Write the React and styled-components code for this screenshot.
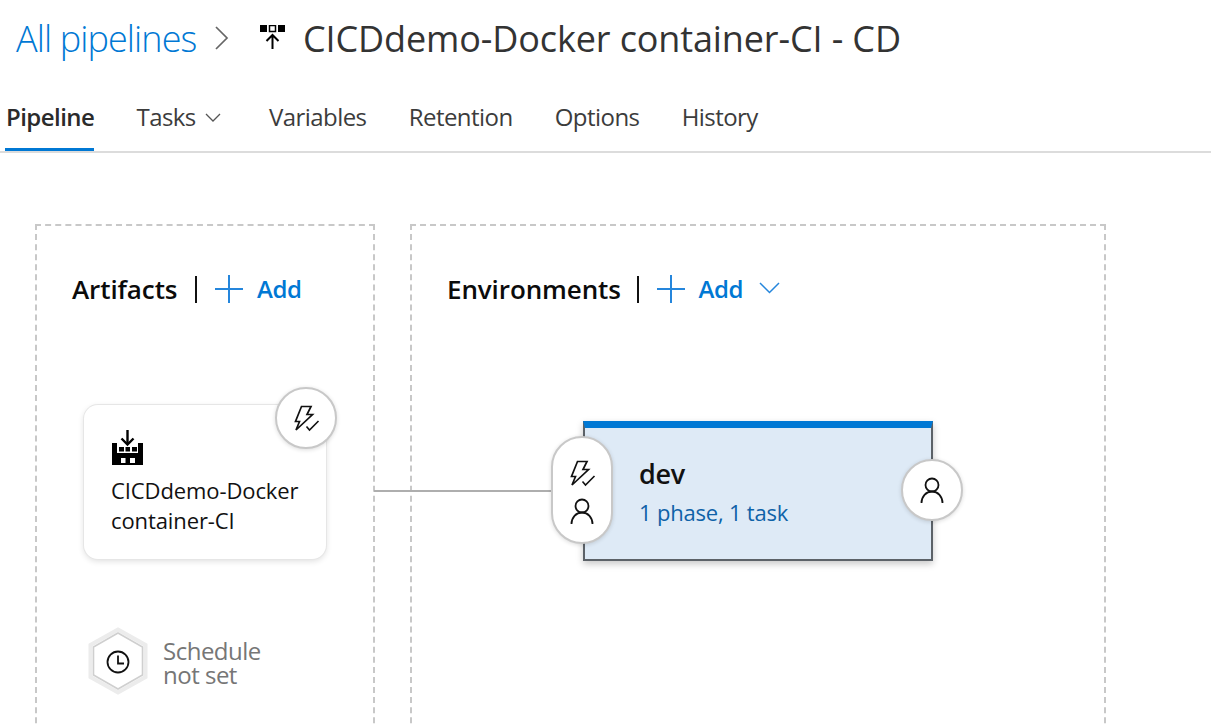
import React from "react";
import styled, { createGlobalStyle } from "styled-components";

const Global = createGlobalStyle`
  html, body { margin: 0; padding: 0; background: #fff; height: 727px; overflow: hidden; }
  body { font-family: "Open Sans", "Noto Sans", "Liberation Sans", sans-serif; }
  * { box-sizing: border-box; }
`;

const Page = styled.div`
  width: 1211px;
  height: 727px;
  overflow: hidden;
  display: flex;
  flex-direction: column;
`;
const Breadcrumb = styled.header`
  height: 76px;
  flex: none;
  display: flex;
  align-items: center;
  padding-left: 16px;
`;
const Crumb = styled.span`
  font-size: 36px;
  font-weight: 300;
  color: #0078d4;
  letter-spacing: -0.9px;
  width: 181px;
  white-space: nowrap;
`;
const CrumbSep = styled.svg`
  width: 16px;
  height: 26px;
  margin-left: 17px;
  margin-right: 30px;
  flex: none;
`;
const Title = styled.h1`
  margin: 0 0 0 17px;
  font-size: 36px;
  font-weight: 400;
  color: #333;
  letter-spacing: -0.12px;
  white-space: nowrap;
`;
const Tabs = styled.nav`
  height: 77px;
  display: flex;
  gap: 41.2px;
  padding-left: 5px;
  border-bottom: 2px solid #dcdcdc;
  flex: none;
`;
const Tab = styled.div`
  height: 75px;
  padding: 24px 0 0 1px;
  font-size: 24px;
  line-height: 34px;
  letter-spacing: -0.55px;
  white-space: nowrap;
  display: flex;
  align-items: flex-start;
  gap: 9px;
  font-weight: ${p => (p.$active ? 600 : 400)};
  color: ${p => (p.$active ? "#2b2b2b" : "#3c3c3c")};
  border-bottom: ${p => (p.$active ? "3px solid #0078d4" : "3px solid transparent")};
`;
const Chevron = styled.svg`
  width: ${p => p.$w}px;
  height: ${p => p.$h}px;
  align-self: center;
  flex: none;
`;
const TabChevron = styled(Chevron)`
  align-self: flex-start;
  margin: 13px 6px 0 0;
`;
const Canvas = styled.main`
  position: relative;
  flex: 1;
  min-height: 0;
  display: flex;
  gap: 35px;
  padding: 71px 0 0 35px;
`;
const Stage = styled.section`
  width: ${p => p.$w}px;
  height: 620px;
  flex: none;
  border: 2px dashed #c8c8c8;
  border-bottom: none;
  padding: 48px 0 0 ${p => p.$pad}px;
`;
const StageHead = styled.div`
  display: flex;
  align-items: center;
  height: 30px;
`;
const StageName = styled.h2`
  margin: 0;
  font-size: 26px;
  line-height: 30px;
  font-weight: 600;
  color: #0b0b0b;
  letter-spacing: -0.1px;
  white-space: nowrap;
  width: ${p => p.$w}px;
`;
const Divider = styled.span`
  width: ${p => p.$t}px;
  height: 27px;
  background: #111;
  margin: 0 18px 0 ${p => p.$l}px;
  flex: none;
`;
const AddLabel = styled.span`
  font-size: 24px;
  font-weight: 600;
  color: #0078d4;
  letter-spacing: -0.35px;
  margin-left: 14px;
  line-height: 30px;
`;
const PlusIcon = styled.svg`
  width: 28px;
  height: 28px;
  flex: none;
`;
const AddChevron = styled(Chevron)`
  margin-left: 16px;
  margin-top: -2px;
`;
const ArtifactCard = styled.article`
  position: relative;
  width: 242px;
  height: 154px;
  margin: 101px 0 0 12px;
  background: #fff;
  border-radius: 14px;
  box-shadow: 0 0 0 1px #e6e6e6, 0 2px 6px rgba(0, 0, 0, 0.14);
  padding: 25px 0 0 27px;
`;
const CardLabel = styled.div`
  margin-top: 10px;
  font-size: 22px;
  line-height: 30px;
  letter-spacing: -0.1px;
  color: #111;
  white-space: nowrap;
`;
const Badge = styled.div`
  position: absolute;
  width: 62px;
  height: 62px;
  border-radius: 50%;
  background: #fff;
  border: 2px solid #c8c8c8;
  box-shadow: 0 1px 4px rgba(0, 0, 0, 0.14);
  display: flex;
  align-items: center;
  justify-content: center;
  z-index: 2;
  top: ${p => p.$top}px;
  right: ${p => p.$right}px;
`;
const Schedule = styled.div`
  display: flex;
  align-items: center;
  gap: 14px;
  margin: 68px 0 0 15px;
`;
const ScheduleText = styled.div`
  font-size: 24px;
  line-height: 24px;
  margin-top: 4px;
  color: #767676;
  letter-spacing: -0.5px;
`;
const EnvCard = styled.article`
  position: relative;
  width: 350px;
  height: 140px;
  margin: 117px 0 0 136px;
  background: #deeaf6;
  border-top: 7px solid #0078d4;
  border-left: 2px solid #5c6268;
  border-right: 2px solid #5c6268;
  border-bottom: 2px solid #5c6268;
  box-shadow: 0 3px 7px rgba(0, 0, 0, 0.22);
  padding: 27px 0 0 54px;
`;
const EnvName = styled.div`
  font-size: 27px;
  line-height: 38px;
  font-weight: 600;
  color: #111;
  letter-spacing: -0.3px;
`;
const EnvMeta = styled.div`
  font-size: 22px;
  line-height: 38px;
  color: #0f62a8;
  letter-spacing: -0.2px;
`;
const ConditionPill = styled.div`
  position: absolute;
  left: -34px;
  top: 8px;
  width: 62px;
  height: 108px;
  padding-top: 4px;
  border-radius: 31px;
  background: #fff;
  border: 2px solid #c8c8c8;
  box-shadow: 0 1px 4px rgba(0, 0, 0, 0.14);
  display: flex;
  flex-direction: column;
  align-items: center;
  justify-content: center;
  gap: 11px;
  z-index: 2;
`;
const Connector = styled.div`
  position: absolute;
  left: 374px;
  top: 337px;
  width: 180px;
  height: 2px;
  background: #aeaeae;
`;

const Bolt = () => (
  <svg width="28" height="27" viewBox="0 0 28 27" fill="none" stroke="#111" strokeWidth="1.7">
    <path d="M9.5 1.5H19L15 9.5H20.5L4 25L7.5 16.5H3.5Z" strokeLinejoin="miter" />
    <path d="M14.5 21.5L17.5 25L26.5 16" stroke="#111" strokeWidth="1.6" />
  </svg>
);
const Person = () => (
  <svg width="24" height="27" viewBox="0 0 24 27" fill="none" stroke="#111" strokeWidth="1.8">
    <circle cx="12" cy="8" r="6.5" />
    <path d="M1.5 26C1.5 19.5 6 14.5 12 14.5C18 14.5 22.5 19.5 22.5 26" />
  </svg>
);
const Factory = () => (
  <svg width="32" height="35" viewBox="0 0 32 35" style={{ display: "block" }}>
    <path d="M16.5 0V14" stroke="#000" strokeWidth="2.4" fill="none" />
    <path d="M10.5 8.5L16.5 14.5L22.5 8.5" stroke="#000" strokeWidth="2.4" fill="none" />
    <path d="M1 35V13H6V23H27V13H32V35Z" fill="#000" />
    <g fill="#000">
      <rect x="8" y="17" width="5" height="4.5" />
      <rect x="14.5" y="17" width="4.5" height="4.5" />
      <rect x="21" y="17" width="5" height="4.5" />
    </g>
    <g fill="#fff">
      <rect x="10" y="28" width="4.5" height="5" />
      <rect x="19" y="28" width="5" height="5" />
    </g>
  </svg>
);
const Hexagon = () => (
  <svg width="62" height="68" viewBox="0 0 62 68" style={{ flex: "none" }}>
    <path d="M31 2.5L58.5 18V50L31 65.5L3.5 50V18Z" fill="#fff" stroke="#ececec" strokeWidth="4" />
    <path d="M31 6L55.5 20V48L31 62L6.5 48V20Z" fill="#fff" stroke="#cfcfcf" strokeWidth="1.6" />
    <circle cx="31" cy="35" r="10.5" fill="none" stroke="#111" strokeWidth="1.8" />
    <path d="M31 28.5V36.5H37" fill="none" stroke="#111" strokeWidth="1.8" />
  </svg>
);
const Plus = () => (
  <PlusIcon viewBox="0 0 28 28">
    <path d="M0 14H28M14 0V28" stroke="#2586dc" strokeWidth="2" fill="none" />
  </PlusIcon>
);
const ReleaseIcon = () => (
  <svg width="26" height="26" viewBox="0 0 26 26" style={{ flex: "none" }}>
    <rect x="0" y="0" width="7" height="7" fill="#000" />
    <rect x="9.5" y="0.5" width="6" height="6" fill="#fff" stroke="#000" strokeWidth="1.5" />
    <rect x="18" y="0" width="7" height="7" fill="#000" />
    <path d="M12.5 10V24M6.5 16L12.5 10L18.5 16" stroke="#000" strokeWidth="2" fill="none" />
  </svg>
);

export default function App() {
  return (
    <Page>
      <Global />
      <Breadcrumb>
        <Crumb>All pipelines</Crumb>
        <CrumbSep viewBox="0 0 16 26">
          <path d="M2 2L13 13L2 24" stroke="#666" strokeWidth="1.7" fill="none" />
        </CrumbSep>
        <ReleaseIcon />
        <Title>CICDdemo-Docker container-CI - CD</Title>
      </Breadcrumb>
      <Tabs>
        <Tab $active>Pipeline</Tab>
        <Tab>
          Tasks
          <TabChevron $w={16} $h={9} viewBox="0 0 16 9">
            <path d="M1 1L8 8L15 1" stroke="#555" strokeWidth="1.3" fill="none" />
          </TabChevron>
        </Tab>
        <Tab>Variables</Tab>
        <Tab>Retention</Tab>
        <Tab>Options</Tab>
        <Tab>History</Tab>
      </Tabs>
      <Canvas>
        <Connector />
        <Stage $w={340} $pad={35}>
          <StageHead>
            <StageName $w={106}>Artifacts</StageName>
            <Divider $t={2} $l={17} />
            <Plus />
            <AddLabel>Add</AddLabel>
          </StageHead>
          <ArtifactCard>
            <Factory />
            <CardLabel>
              CICDdemo-Docker
              <br />
              container-CI
            </CardLabel>
            <Badge $top={-18} $right={-11}>
              <Bolt />
            </Badge>
          </ArtifactCard>
          <Schedule>
            <Hexagon />
            <ScheduleText>
              Schedule
              <br />
              not set
            </ScheduleText>
          </Schedule>
        </Stage>
        <Stage $w={696} $pad={35}>
          <StageHead>
            <StageName $w={173}>Environments</StageName>
            <Divider $t={1.5} $l={17} />
            <Plus />
            <AddLabel>Add</AddLabel>
            <AddChevron $w={21} $h={12} viewBox="0 0 21 12">
              <path d="M1 1L10.5 10.5L20 1" stroke="#2586dc" strokeWidth="1.5" fill="none" />
            </AddChevron>
          </StageHead>
          <EnvCard>
            <EnvName>dev</EnvName>
            <EnvMeta>1 phase, 1 task</EnvMeta>
            <ConditionPill>
              <Bolt />
              <Person />
            </ConditionPill>
            <Badge $top={31} $right={-32}>
              <Person />
            </Badge>
          </EnvCard>
        </Stage>
      </Canvas>
    </Page>
  );
}
